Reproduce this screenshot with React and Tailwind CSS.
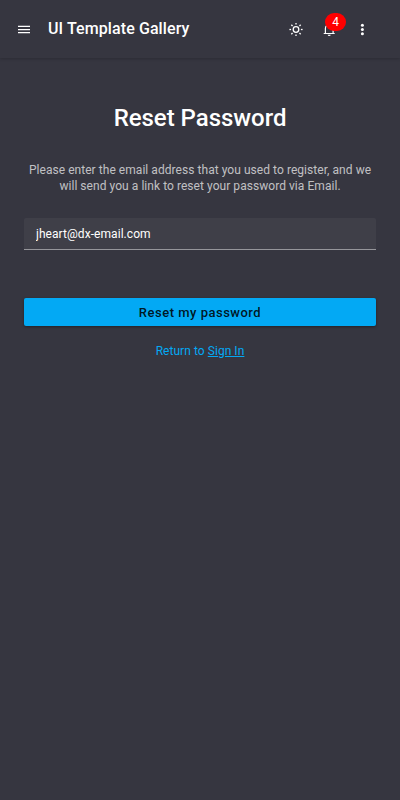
function SunIcon() {
  const rays = [0, 45, 90, 135, 180, 225, 270, 315];
  return (
    <svg className="block size-4" viewBox="0 -0.5 16 16" fill="none" stroke="currentColor" strokeWidth="1.3">
      <circle cx="8" cy="8" r="2.8" />
      {rays.map((angle) => (
        <path key={angle} d="M8 1.4V3.1" transform={`rotate(${angle} 8 8)`} />
      ))}
    </svg>
  );
}

function BellIcon() {
  return (
    <svg className="block size-4" viewBox="0 -0.5 16 16" fill="none" stroke="currentColor" strokeWidth="1.2">
      <path d="M4.4 12V7a3.85 3.85 0 0 1 7.7 0v5M2.7 12h11" />
      <path d="M6.7 13.2h3a1.5 1.3 0 0 1-3 0Z" fill="currentColor" stroke="none" />
    </svg>
  );
}

function Header() {
  return (
    <header className="flex h-[58px] items-center bg-[#363640] pr-[30px] pl-4 text-white shadow-[0_1px_3px_rgba(0,0,0,0.2)]">
      <button aria-label="Menu" className="flex size-4 items-center justify-center">
        <svg className="block size-4" viewBox="0 0 16 16" fill="currentColor">
          <path d="M2 4.7h12v1.3H2zM2 8h12v1.2H2zM2 11h12v1.3H2z" />
        </svg>
      </button>
      <h1 className="ml-4 grow text-base leading-6 font-medium tracking-[0.1px]">UI Template Gallery</h1>
      <div className="flex items-center gap-[17px]">
        <button aria-label="Theme"><SunIcon /></button>
        <button aria-label="Notifications" className="relative">
          <BellIcon />
          <span className="absolute -top-2 left-1 flex h-[18px] w-[21px] items-center justify-center rounded-full bg-[#ff0000] text-xs leading-[18px]">
            4
          </span>
        </button>
        <button aria-label="More">
          <svg className="block size-4" viewBox="-0.4 -0.5 16 16" fill="currentColor">
            <circle cx="8" cy="3.8" r="1.5" />
            <circle cx="8" cy="8" r="1.5" />
            <circle cx="8" cy="12.2" r="1.5" />
          </svg>
        </button>
      </div>
    </header>
  );
}

export default function App() {
  return (
    <div className="flex min-h-screen flex-col bg-[#363640] font-[Roboto,sans-serif] text-xs text-white">
      <Header />
      <main className="flex flex-col px-6 pt-11 text-center">
        <h2 className="text-2xl leading-8 font-medium tracking-[-0.03px]">Reset Password</h2>
        <p className="mt-7 leading-4 tracking-[0.05px] text-white/70">
          Please enter the email address that you used to register, and we will send you a link to reset your password via Email.
        </p>
        <input
          type="email"
          aria-label="Email"
          defaultValue="jheart@dx-email.com"
          className="mt-6 h-8 rounded-t-xs border-b border-[#96969b] bg-[#3f3f48] px-3 pt-px text-xs tracking-[0.06px] text-white outline-none"
        />
        <button className="mt-12 h-7 rounded-xs bg-[#03a9f4] pt-px text-[13px] font-medium tracking-[0.5px] text-black/87 shadow-[0_1px_3px_rgba(0,0,0,0.4)]">
          Reset my password
        </button>
        <p className="mt-[17px] leading-4 tracking-[0.05px] text-[#03a9f4]">
          Return to <a href="#" className="underline">Sign In</a>
        </p>
      </main>
    </div>
  );
}
